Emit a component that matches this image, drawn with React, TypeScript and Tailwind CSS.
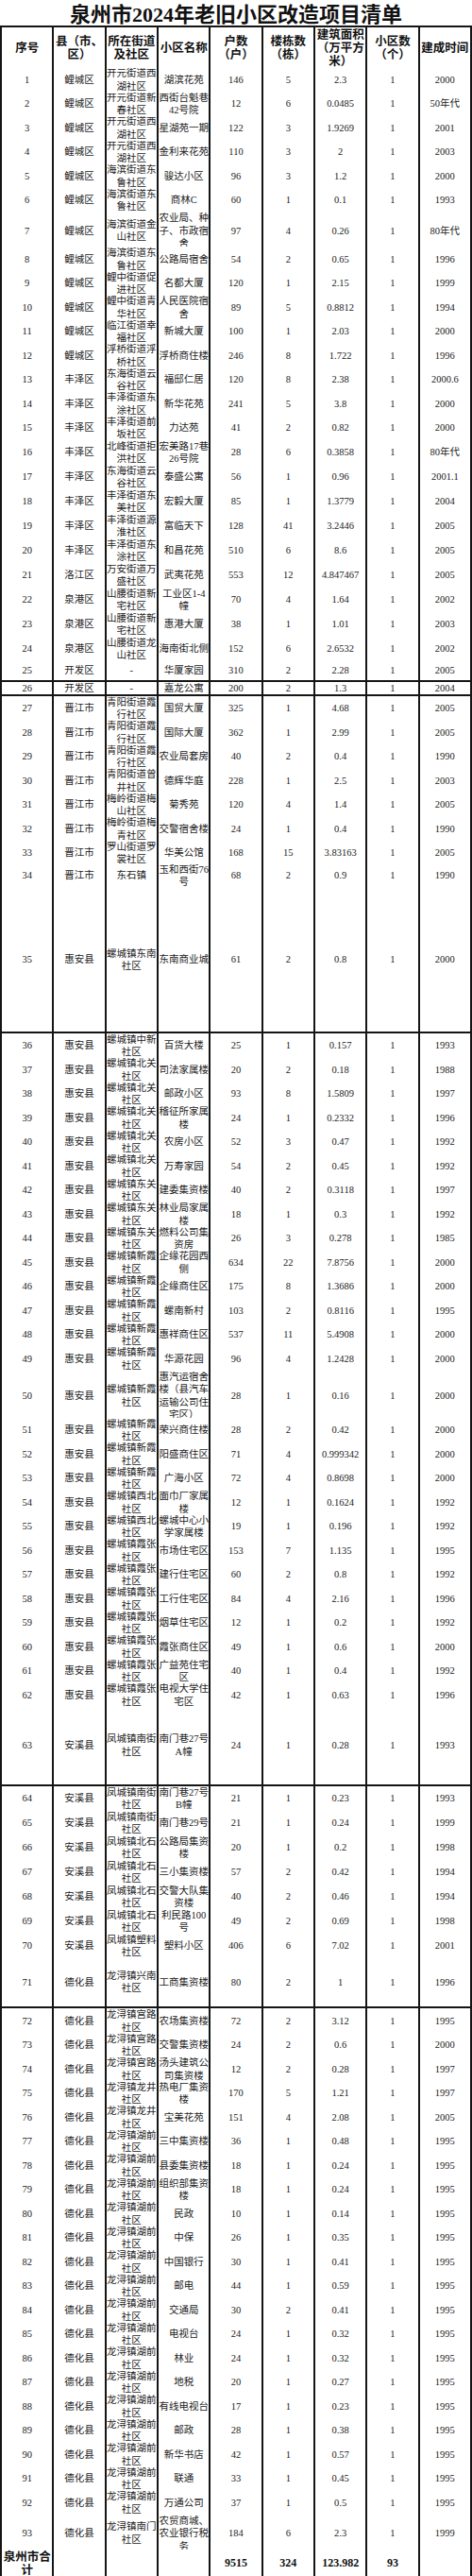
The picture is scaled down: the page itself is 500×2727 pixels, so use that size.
import React from "react";

type Row = [string, string, string, string, string, string, string, string, string];

const rows: Row[] = [
  ["1", "鲤城区", "开元街道西湖社区", "湖滨花苑", "146", "5", "2.3", "1", "2000"],
  ["2", "鲤城区", "开元街道新春社区", "西街台魁巷42号院", "12", "6", "0.0485", "1", "50年代"],
  ["3", "鲤城区", "开元街道西湖社区", "星湖苑一期", "122", "3", "1.9269", "1", "2001"],
  ["4", "鲤城区", "开元街道西湖社区", "金利来花苑", "110", "3", "2", "1", "2003"],
  ["5", "鲤城区", "海滨街道东鲁社区", "骏达小区", "96", "3", "1.2", "1", "2000"],
  ["6", "鲤城区", "海滨街道东鲁社区", "商林C", "60", "1", "0.1", "1", "1993"],
  ["7", "鲤城区", "海滨街道金山社区", "农业局、种子、市政宿舍", "97", "4", "0.26", "1", "80年代"],
  ["8", "鲤城区", "海滨街道东鲁社区", "公路局宿舍", "54", "2", "0.65", "1", "1996"],
  ["9", "鲤城区", "鲤中街道促进社区", "名都大厦", "120", "1", "2.15", "1", "1999"],
  ["10", "鲤城区", "鲤中街道青华社区", "人民医院宿舍", "89", "5", "0.8812", "1", "1994"],
  ["11", "鲤城区", "临江街道幸福社区", "新城大厦", "100", "1", "2.03", "1", "2000"],
  ["12", "鲤城区", "浮桥街道浮桥社区", "浮桥商住楼", "246", "8", "1.722", "1", "1996"],
  ["13", "丰泽区", "东海街道云谷社区", "福邸仁居", "120", "8", "2.38", "1", "2000.6"],
  ["14", "丰泽区", "丰泽街道东涂社区", "新华花苑", "241", "5", "3.8", "1", "2000"],
  ["15", "丰泽区", "丰泽街道前坂社区", "力达苑", "41", "2", "0.82", "1", "2000"],
  ["16", "丰泽区", "北峰街道拒洪社区", "宏美路17巷26号院", "28", "6", "0.3858", "1", "80年代"],
  ["17", "丰泽区", "东海街道云谷社区", "泰盛公寓", "56", "1", "0.96", "1", "2001.1"],
  ["18", "丰泽区", "丰泽街道东美社区", "宏毅大厦", "85", "1", "1.3779", "1", "2004"],
  ["19", "丰泽区", "丰泽街道源淮社区", "富临天下", "128", "41", "3.2446", "1", "2005"],
  ["20", "丰泽区", "丰泽街道东涂社区", "和昌花苑", "510", "6", "8.6", "1", "2005"],
  ["21", "洛江区", "万安街道万盛社区", "武夷花苑", "553", "12", "4.847467", "1", "2005"],
  ["22", "泉港区", "山腰街道新宅社区", "工业区1-4幢", "70", "4", "1.64", "1", "2002"],
  ["23", "泉港区", "山腰街道新宅社区", "惠港大厦", "38", "1", "1.01", "1", "2003"],
  ["24", "泉港区", "山腰街道龙山社区", "海南街北侧", "152", "6", "2.6532", "1", "2002"],
  ["25", "开发区", "-", "华厦家园", "310", "2", "2.28", "1", "2005"],
  ["26", "开发区", "-", "嘉龙公寓", "200", "2", "1.3", "1", "2004"],
  ["27", "晋江市", "青阳街道霞行社区", "国贸大厦", "325", "1", "4.68", "1", "2005"],
  ["28", "晋江市", "青阳街道霞行社区", "国际大厦", "362", "1", "2.99", "1", "2005"],
  ["29", "晋江市", "青阳街道霞行社区", "农业局套房", "40", "2", "0.4", "1", "1990"],
  ["30", "晋江市", "青阳街道曾井社区", "德辉华庭", "228", "1", "2.5", "1", "2003"],
  ["31", "晋江市", "梅岭街道梅山社区", "菊秀苑", "120", "4", "1.4", "1", "2005"],
  ["32", "晋江市", "梅岭街道梅青社区", "交警宿舍楼", "24", "1", "0.4", "1", "1990"],
  ["33", "晋江市", "罗山街道罗裳社区", "华美公馆", "168", "15", "3.83163", "1", "2005"],
  ["34", "晋江市", "东石镇", "玉和西街76号", "68", "2", "0.9", "1", "1990"],
  ["35", "惠安县", "螺城镇东南社区", "东南商业城", "61", "2", "0.8", "1", "2000"],
  ["36", "惠安县", "螺城镇中新社区", "百货大楼", "25", "1", "0.157", "1", "1993"],
  ["37", "惠安县", "螺城镇北关社区", "司法家属楼", "20", "2", "0.18", "1", "1988"],
  ["38", "惠安县", "螺城镇北关社区", "邮政小区", "93", "8", "1.5809", "1", "1997"],
  ["39", "惠安县", "螺城镇北关社区", "稽征所家属楼", "24", "1", "0.2332", "1", "1996"],
  ["40", "惠安县", "螺城镇北关社区", "农房小区", "52", "3", "0.47", "1", "1992"],
  ["41", "惠安县", "螺城镇北关社区", "万寿家园", "54", "2", "0.45", "1", "1992"],
  ["42", "惠安县", "螺城镇东关社区", "建委集资楼", "40", "2", "0.3118", "1", "1997"],
  ["43", "惠安县", "螺城镇东关社区", "林业局家属楼", "18", "1", "0.3", "1", "1992"],
  ["44", "惠安县", "螺城镇东关社区", "燃料公司集资房", "26", "3", "0.278", "1", "1985"],
  ["45", "惠安县", "螺城镇新霞社区", "企缘花园西侧", "634", "22", "7.8756", "1", "2000"],
  ["46", "惠安县", "螺城镇新霞社区", "企缘商住区", "175", "8", "1.3686", "1", "2000"],
  ["47", "惠安县", "螺城镇新霞社区", "螺南新村", "103", "2", "0.8116", "1", "1995"],
  ["48", "惠安县", "螺城镇新霞社区", "惠祥商住区", "537", "11", "5.4908", "1", "2000"],
  ["49", "惠安县", "螺城镇新霞社区", "华源花园", "96", "4", "1.2428", "1", "2000"],
  ["50", "惠安县", "螺城镇新霞社区", "惠汽运宿舍楼（县汽车运输公司住宅区）", "28", "1", "0.16", "1", "2000"],
  ["51", "惠安县", "螺城镇新霞社区", "荣兴商住楼", "28", "2", "0.42", "1", "2000"],
  ["52", "惠安县", "螺城镇新霞社区", "阳盛商住区", "71", "4", "0.999342", "1", "2000"],
  ["53", "惠安县", "螺城镇新霞社区", "广海小区", "72", "4", "0.8698", "1", "2000"],
  ["54", "惠安县", "螺城镇西北社区", "面巾厂家属楼", "12", "1", "0.1624", "1", "1992"],
  ["55", "惠安县", "螺城镇西北社区", "螺城中心小学家属楼", "19", "1", "0.196", "1", "1992"],
  ["56", "惠安县", "螺城镇霞张社区", "市场住宅区", "153", "7", "1.135", "1", "1995"],
  ["57", "惠安县", "螺城镇霞张社区", "建行住宅区", "60", "2", "0.8", "1", "1992"],
  ["58", "惠安县", "螺城镇霞张社区", "工行住宅区", "84", "4", "2.16", "1", "1996"],
  ["59", "惠安县", "螺城镇霞张社区", "烟草住宅区", "12", "1", "0.2", "1", "1992"],
  ["60", "惠安县", "螺城镇霞张社区", "霞张商住区", "49", "1", "0.6", "1", "2000"],
  ["61", "惠安县", "螺城镇霞张社区", "广益苑住宅区", "40", "1", "0.4", "1", "1992"],
  ["62", "惠安县", "螺城镇霞张社区", "电视大学住宅区", "42", "1", "0.63", "1", "1996"],
  ["63", "安溪县", "凤城镇南街社区", "南门巷27号A幢", "24", "1", "0.28", "1", "1993"],
  ["64", "安溪县", "凤城镇南街社区", "南门巷27号B幢", "21", "1", "0.23", "1", "1993"],
  ["65", "安溪县", "凤城镇南街社区", "南门巷29号", "21", "1", "0.24", "1", "1999"],
  ["66", "安溪县", "凤城镇北石社区", "公路局集资楼", "20", "1", "0.2", "1", "1998"],
  ["67", "安溪县", "凤城镇北石社区", "三小集资楼", "57", "2", "0.42", "1", "1994"],
  ["68", "安溪县", "凤城镇北石社区", "交警大队集资楼", "40", "2", "0.46", "1", "1994"],
  ["69", "安溪县", "凤城镇北石社区", "利民路100号", "49", "2", "0.69", "1", "1998"],
  ["70", "安溪县", "凤城镇塑料社区", "塑料小区", "406", "6", "7.02", "1", "2001"],
  ["71", "德化县", "龙浔镇兴南社区", "工商集资楼", "80", "2", "1", "1", "1996"],
  ["72", "德化县", "龙浔镇宫路社区", "农场集资楼", "72", "2", "3.12", "1", "1995"],
  ["73", "德化县", "龙浔镇宫路社区", "交警集资楼", "24", "2", "0.6", "1", "2000"],
  ["74", "德化县", "龙浔镇宫路社区", "汤头建筑公司集资楼", "12", "2", "0.28", "1", "1997"],
  ["75", "德化县", "龙浔镇龙井社区", "热电厂集资楼", "170", "5", "1.21", "1", "1997"],
  ["76", "德化县", "龙浔镇龙井社区", "宝美花苑", "151", "4", "2.08", "1", "2005"],
  ["77", "德化县", "龙浔镇湖前社区", "三中集资楼", "36", "1", "0.48", "1", "1995"],
  ["78", "德化县", "龙浔镇湖前社区", "县委集资楼", "18", "1", "0.24", "1", "1995"],
  ["79", "德化县", "龙浔镇湖前社区", "组织部集资楼", "18", "1", "0.24", "1", "1995"],
  ["80", "德化县", "龙浔镇湖前社区", "民政", "10", "1", "0.14", "1", "1995"],
  ["81", "德化县", "龙浔镇湖前社区", "中保", "26", "1", "0.35", "1", "1995"],
  ["82", "德化县", "龙浔镇湖前社区", "中国银行", "30", "1", "0.41", "1", "1995"],
  ["83", "德化县", "龙浔镇湖前社区", "邮电", "44", "1", "0.59", "1", "1995"],
  ["84", "德化县", "龙浔镇湖前社区", "交通局", "30", "2", "0.41", "1", "1995"],
  ["85", "德化县", "龙浔镇湖前社区", "电视台", "24", "1", "0.32", "1", "1995"],
  ["86", "德化县", "龙浔镇湖前社区", "林业", "24", "1", "0.32", "1", "1995"],
  ["87", "德化县", "龙浔镇湖前社区", "地税", "20", "1", "0.27", "1", "1995"],
  ["88", "德化县", "龙浔镇湖前社区", "有线电视台", "17", "1", "0.23", "1", "1995"],
  ["89", "德化县", "龙浔镇湖前社区", "邮政", "28", "1", "0.38", "1", "1995"],
  ["90", "德化县", "龙浔镇湖前社区", "新华书店", "42", "1", "0.57", "1", "1995"],
  ["91", "德化县", "龙浔镇湖前社区", "联通", "33", "1", "0.45", "1", "1995"],
  ["92", "德化县", "龙浔镇湖前社区", "万通公司", "37", "1", "0.5", "1", "1995"],
  ["93", "德化县", "龙浔镇南门社区", "农贸商城、农业银行税务", "184", "6", "2.3", "1", "1999"],
];

const H: Record<string, string> = {
  "7": "h-[35px]",
  "15": "h-[24px]",
  "16": "h-[24px]",
  "17": "h-[24px]",
  "18": "h-[24px]",
  "19": "h-[24px]",
  "20": "h-[24px]",
  "21": "h-[24px]",
  "22": "h-[24px]",
  "23": "h-[24px]",
  "24": "h-[24px]",
  "25": "h-[20px]",
  "26": "h-[13px]",
  "33": "h-[22px]",
  "34": "h-[25px]",
  "35": "h-[151px]",
  "50": "h-[48px]",
  "63": "h-[82px]",
  "64": "h-[24px]",
  "65": "h-[24px]",
  "66": "h-[24px]",
  "67": "h-[24px]",
  "68": "h-[24px]",
  "69": "h-[24px]",
  "70": "h-[24px]",
  "71": "h-[51.5px]",
  "93": "h-[35px]",
};

const cell = "bg-white flex items-center justify-center text-center";

const headers: React.ReactNode[] = [
  "序号",
  <>县（市、<br />区）</>,
  <>所在街道<br />及社区</>,
  "小区名称",
  <>户数<br />（户）</>,
  <>楼栋数<br />（栋）</>,
  <>建筑面积<br />（万平方<br />米）</>,
  <>小区数<br />（个）</>,
  "建成时间",
];

export default function App() {
  return (
    <div className="w-[500px] bg-white font-['Liberation_Serif','Noto_Sans_CJK_SC',serif]">
      <div className="h-[27px] flex items-center justify-center text-[22px] font-bold leading-[27px] text-[#111] pt-[3px]">
        泉州市2024年老旧小区改造项目清单
      </div>
      <div className="flex flex-col gap-[2px] bg-[#151515] p-[2px]">
        <div className="grid grid-cols-9 gap-[2px] h-[40px]">
          {headers.map((h, i) => (
            <div
              key={i}
              className={cell + " text-[12.5px] leading-[14px] font-bold text-[#111] font-['Noto_Sans_CJK_SC',sans-serif]"}
            >
              <div>{h}</div>
            </div>
          ))}
        </div>
        {rows.map((r) => (
          <div key={r[0]} className={"grid grid-cols-9 gap-[2px] " + (H[r[0]] ?? "h-[23.5px]")}>
            {r.map((v, i) => (
              <div key={i} className={cell + " text-[10.5px] leading-[13.5px] text-[#222]"}>
                <div className="w-full">{v}</div>
              </div>
            ))}
          </div>
        ))}
        <div className="grid grid-cols-9 gap-[2px] h-[26px]">
          <div className={cell + " text-[12.5px] leading-[14px] font-bold text-[#111] font-['Noto_Sans_CJK_SC',sans-serif]"}>
            <div>泉州市合<br />计</div>
          </div>
          <div className={cell}></div>
          <div className={cell}></div>
          <div className={cell}></div>
          <div className={cell + " text-[12px] font-bold text-[#111]"}>9515</div>
          <div className={cell + " text-[12px] font-bold text-[#111]"}>324</div>
          <div className={cell + " text-[12px] font-bold text-[#111]"}>123.982</div>
          <div className={cell + " text-[12px] font-bold text-[#111]"}>93</div>
          <div className={cell}></div>
        </div>
      </div>
    </div>
  );
}
